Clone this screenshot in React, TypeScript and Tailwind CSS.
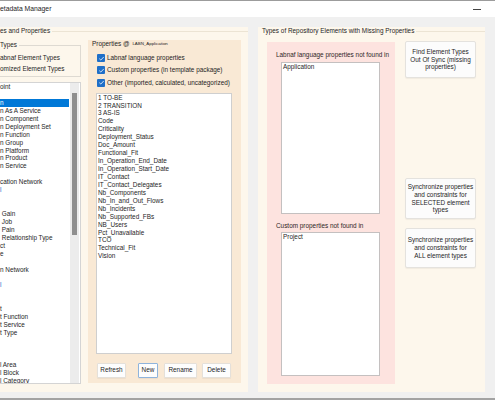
import React from 'react';

type TypeRow = { label: string; selected?: boolean; link?: boolean };

// the window is cropped on the left, so only the tails of the names show
const typeRows: TypeRow[] = [
  { label: 'oint' },
  { label: '' },
  { label: 'n', selected: true },
  { label: 'n As A Service' },
  { label: 'n Component' },
  { label: 'n Deployment Set' },
  { label: 'n Function' },
  { label: 'n Group' },
  { label: 'n Platform' },
  { label: 'n Product' },
  { label: 'n Service' },
  { label: '' },
  { label: 'cation Network' },
  { label: 'l', link: true },
  { label: '' },
  { label: '' },
  { label: ' Gain' },
  { label: ' Job' },
  { label: ' Pain' },
  { label: ' Relationship Type' },
  { label: 'ct' },
  { label: 'e' },
  { label: '' },
  { label: 'n Network' },
  { label: '' },
  { label: 'l', link: true },
  { label: '' },
  { label: '' },
  { label: 't' },
  { label: 't Function' },
  { label: 't Service' },
  { label: 't Type' },
  { label: '' },
  { label: '' },
  { label: '' },
  { label: 'l Area' },
  { label: 'l Block' },
  { label: 'l Category' },
];

const properties = [
  '1 TO-BE',
  '2 TRANSITION',
  '3 AS-IS',
  'Code',
  'Criticality',
  'Deployment_Status',
  'Doc_Amount',
  'Functional_Fit',
  'In_Operation_End_Date',
  'In_Operation_Start_Date',
  'IT_Contact',
  'IT_Contact_Delegates',
  'Nb_Components',
  'Nb_In_and_Out_Flows',
  'Nb_Incidents',
  'Nb_Supported_FBs',
  'NB_Users',
  'Pct_Unavailable',
  'TCO',
  'Technical_Fit',
  'Vision',
];

function Checked({ label }: { label: string }) {
  return (
    <label className="flex items-center h-[8px] pl-[9px] gap-[2px]">
      <span className="w-[8px] h-[8px] rounded-[1px] bg-[#1f6fc8] flex items-center justify-center">
        <svg viewBox="0 0 8 8" className="w-[7px] h-[7px]">
          <path d="M1.5 4.2 L3.2 5.8 L6.6 2.2" fill="none" stroke="#fff" strokeWidth="0.9" />
        </svg>
      </span>
      <span className="leading-[8px]">{label}</span>
    </label>
  );
}

function SmallButton({ label, focused, className }: { label: string; focused?: boolean; className: string }) {
  return (
    <button
      className={
        'h-[15px] bg-[#fdfdfd] rounded-[1px] leading-[8px] text-center shadow-[0_1px_1px_rgba(0,0,0,0.05)] ' +
        (focused ? 'border border-[#8fb4dc] ' : 'border border-[#e4e0da] ') +
        className
      }
    >
      {label}
    </button>
  );
}

function SideButton({ lines, className }: { lines: string[]; className: string }) {
  return (
    <button
      className={
        'w-[71px] bg-[#fcfcfc] border border-[#e4e2de] rounded-[2px] shadow-[0_1px_1px_rgba(0,0,0,0.05)] flex flex-col items-center justify-center ' +
        className
      }
    >
      {lines.map((l) => (
        <span key={l} className="leading-[7.9px] whitespace-nowrap">
          {l}
        </span>
      ))}
    </button>
  );
}

function LeftPanel() {
  return (
    <section className="w-[248px] h-[365px] bg-[#fdf7ec] flex flex-col">
      <div className="h-[8px] flex items-center">
        <span className="leading-[8px] pr-[2px]">es and Properties</span>
        <span className="flex-1 h-px bg-[#ece4d4]" />
      </div>

      <div className="mt-[5px] flex items-start">
        {/* element types column */}
        <div className="w-[81px] flex flex-col">
          <fieldset className="mt-[1px] h-[36px] border border-l-0 border-[#dedad2]">
            <legend className="leading-[8px] pr-[2px]">Types</legend>
            <div className="pt-[5px] flex flex-col gap-[3px]">
              <span className="leading-[8px]">abnaf Element Types</span>
              <span className="leading-[8px]">omized Element Types</span>
            </div>
          </fieldset>

          <div className="mt-[5px] h-[302px] bg-white border border-l-0 border-[#d4d4d4] flex">
            <ul className="w-[69px] overflow-hidden">
              {typeRows.map((r, i) => (
                <li
                  key={i}
                  className={
                    'h-[7.95px] leading-[7.95px] whitespace-pre ' +
                    (r.selected ? 'bg-[#0078d7] text-white' : r.link ? 'text-[#1a66cc]' : '')
                  }
                >
                  {r.label}
                </li>
              ))}
            </ul>
            <div className="ml-[1px] w-[9px] h-full bg-[#ececec]">
              <div className="mt-[10px] ml-[2px] w-[5px] h-[142px] bg-[#8f8f8f]" />
            </div>
          </div>
        </div>

        {/* properties box */}
        <div className="ml-[7px] w-[153px] h-[343px] bg-[#f9e9d5] flex flex-col">
          <div className="h-[8px] pl-[4px] flex items-center">
            <span className="leading-[8px]">Properties @</span>
            <span className="ml-[3px] -mt-[2px] text-[4.4px] leading-[5px]">LABN_Application</span>
          </div>
          <div className="mt-[6px] flex flex-col gap-[4.3px]">
            <Checked label="Labnaf language properties" />
            <Checked label="Custom properties (in template package)" />
            <Checked label="Other (imported, calculated, uncategorized)" />
          </div>
          <ul className="mt-[6px] ml-[8px] w-[136px] h-[261px] bg-white border border-[#cfcfcf] pl-[1px]">
            {properties.map((p) => (
              <li key={p} className="h-[7.95px] leading-[7.95px] whitespace-nowrap">
                {p}
              </li>
            ))}
          </ul>
          <div className="mt-[9px] flex">
            <SmallButton label="Refresh" className="ml-[9px] w-[29px]" />
            <SmallButton label="New" focused className="ml-[12px] w-[20px]" />
            <SmallButton label="Rename" className="ml-[6px] w-[33px]" />
            <SmallButton label="Delete" className="ml-[5px] w-[29px]" />
          </div>
        </div>
      </div>
    </section>
  );
}

function RightPanel() {
  return (
    <section className="w-[227px] h-[365px] bg-[#fdf7ec] flex flex-col">
      <div className="h-[8px] pl-[4px] flex items-center">
        <span className="leading-[8px] pr-[2px]">Types of Repository Elements with Missing Properties</span>
        <span className="flex-1 h-px bg-[#ece4d4]" />
      </div>

      <div className="mt-[6px] flex items-start">
        <div className="mt-[1px] ml-[9px] w-[128px] h-[342px] bg-[#fde3df] flex flex-col">
          <span className="mt-[9px] ml-[9px] leading-[8px] text-[#2e2626]">Labnaf language properties not found in</span>
          <div className="mt-[3px] ml-[14px] w-[99px] h-[152px] bg-white border border-[#c4c0c0] pl-[1px]">
            <div className="leading-[8px]">Application</div>
          </div>
          <span className="mt-[8px] ml-[9px] leading-[8px] text-[#2e2626]">Custom properties not found in</span>
          <div className="mt-[2px] ml-[14px] w-[99px] h-[144px] bg-white border border-[#c4c0c0] pl-[1px]">
            <div className="leading-[8px]">Project</div>
          </div>
        </div>

        <div className="ml-[10px] flex flex-col">
          <SideButton className="h-[37px]" lines={['Find Element Types', 'Out Of Sync (missing', 'properties)']} />
          <SideButton
            className="mt-[100px] h-[41px]"
            lines={['Synchronize properties', 'and constraints for', 'SELECTED element', 'types']}
          />
          <SideButton
            className="mt-[9px] h-[40px]"
            lines={['Synchronize properties', 'and constraints for', 'ALL element types']}
          />
        </div>
      </div>
    </section>
  );
}

export default function App() {
  return (
    <div className="w-[495px] h-[400px] overflow-hidden bg-[#f0f0f0] border-b-2 border-[#a3a3a3] flex flex-col font-['Liberation_Sans',Arial,sans-serif] text-[6.4px] text-[#1e1e1e]">
      <div className="h-[17px] shrink-0 bg-white border-t border-[#9c9c9c] flex items-center justify-between pr-[14px]">
        <span className="text-[6.8px] leading-[8px]">etadata Manager</span>
        <span className="block w-[8px] h-px bg-[#444]" />
      </div>
      <div className="mt-[10px] flex gap-[10px]">
        <LeftPanel />
        <RightPanel />
      </div>
    </div>
  );
}
